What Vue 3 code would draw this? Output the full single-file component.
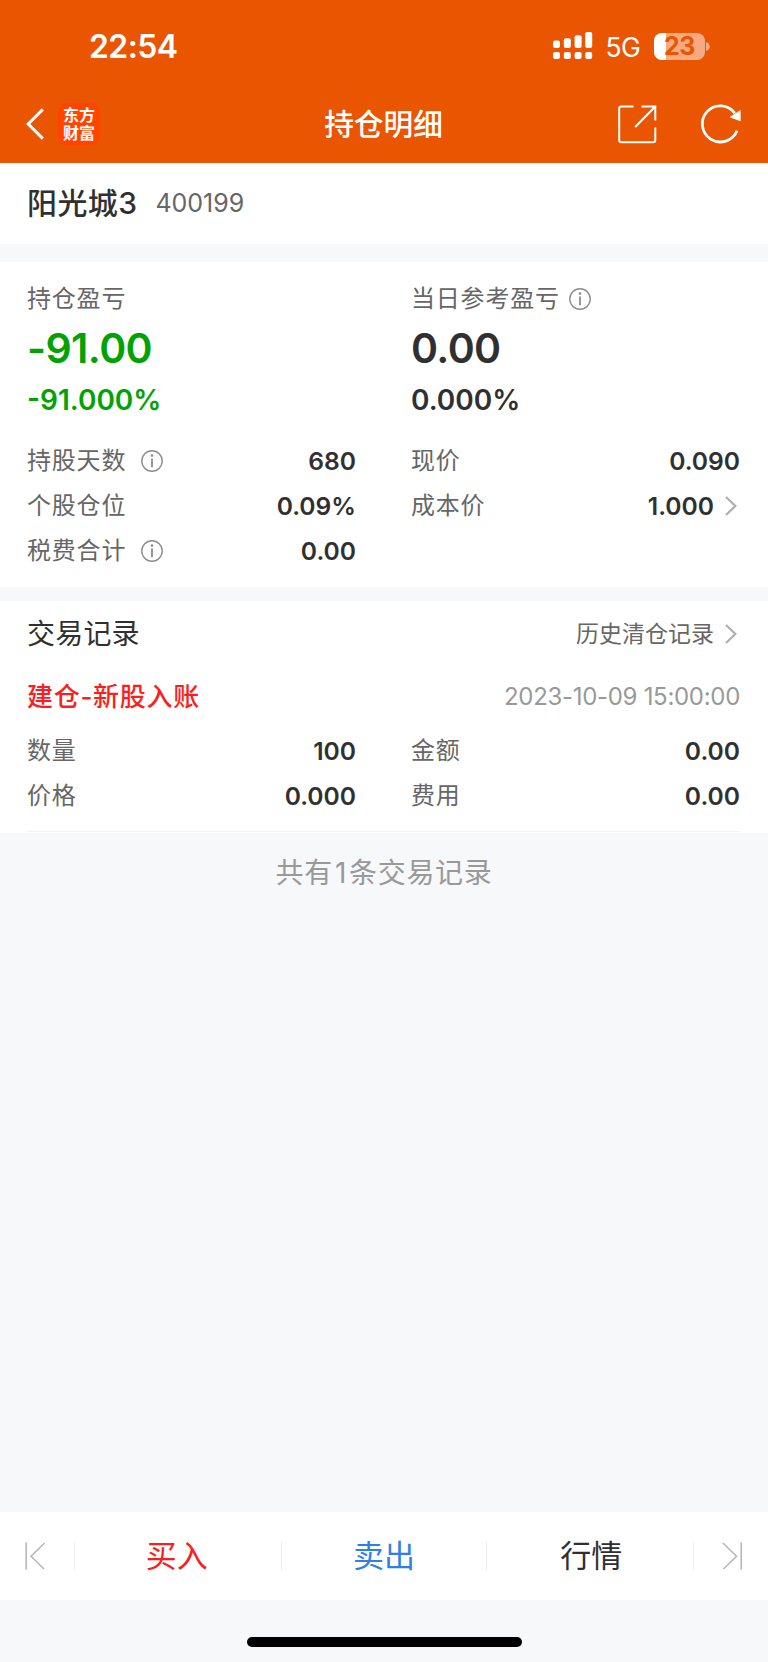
<template>
  <div class="page">
    <header class="header">
      <div class="status-bar">
        <span class="time">22:54</span>
        <div class="status-right">
          <svg class="signal" width="40" height="28" viewBox="0 0 40 28" fill="#fff">
            <rect x="0" y="8.5" width="7" height="7.5" rx="2" />
            <rect x="10.8" y="6.2" width="7" height="9.8" rx="2" />
            <rect x="21.6" y="3.2" width="7" height="12.8" rx="2" />
            <rect x="32.2" y="0" width="7" height="16" rx="2" />
            <rect x="0" y="20" width="7" height="7" rx="2" />
            <rect x="10.8" y="20" width="7" height="7" rx="2" />
            <rect x="21.6" y="20" width="7" height="7" rx="2" />
            <rect x="32.2" y="20" width="7" height="7" rx="2" />
          </svg>
          <span class="network">5G</span>
          <div class="battery">
            <div class="battery-level" :style="{ width: battery + '%' }"></div>
            <span class="battery-text">{{ battery }}</span>
          </div>
          <svg class="battery-cap" width="4" height="9" viewBox="0 0 4 9">
            <path d="M0 0C5 1.6 5 7.4 0 9Z" fill="#fff" fill-opacity="0.5" />
          </svg>
        </div>
      </div>
      <div class="nav-bar">
        <div class="nav-left">
          <svg width="18" height="32" viewBox="0 0 18 32" fill="none" stroke="#fff" stroke-width="3">
            <path d="M16.8 1.4L2.2 16L16.8 30.6" />
          </svg>
          <div class="logo">
            <span>东方</span>
            <span>财富</span>
          </div>
        </div>
        <h1 class="nav-title">持仓明细</h1>
        <div class="nav-right">
          <svg width="39" height="39" viewBox="0 0 39 39" fill="none" stroke="#fff" stroke-width="2">
            <path d="M15.5 1.5H3.5Q1.2 1.5 1.2 3.8V35Q1.2 37.3 3.5 37.3H35Q37.3 37.3 37.3 35V22.5" />
            <path d="M23.5 1.5H37.3V15.5M37 1.8L17.2 22" />
          </svg>
          <svg width="40" height="40" viewBox="0 0 40 40" fill="none">
            <path
              d="M33.8 9.2A18 18 0 1 0 36 26.8"
              stroke="#fff"
              stroke-width="2.8"
            />
            <path d="M39.6 6V17.2L28.4 13.2Z" fill="#fff" />
          </svg>
        </div>
      </div>
    </header>

    <section class="stock">
      <span class="stock-name">阳光城3</span>
      <span class="stock-code">400199</span>
    </section>

    <section class="position">
      <div class="columns">
        <div class="summary green">
          <div class="label">持仓盈亏</div>
          <div class="amount">-91.00</div>
          <div class="percent">-91.000%</div>
        </div>
        <div class="summary">
          <div class="label">
            当日参考盈亏
            <svg class="info near" viewBox="0 0 22 22"><use href="#info-icon" /></svg>
          </div>
          <div class="amount">0.00</div>
          <div class="percent">0.000%</div>
        </div>
      </div>
      <div class="columns details">
        <div v-for="(column, i) in details" :key="i" class="column">
          <div v-for="row in column" :key="row.label" class="row">
            <span class="label">
              {{ row.label }}
              <svg v-if="row.info" class="info" viewBox="0 0 22 22"><use href="#info-icon" /></svg>
            </span>
            <span class="value">
              {{ row.value }}
              <svg v-if="row.link" class="arrow" viewBox="0 0 12 20"><use href="#arrow-icon" /></svg>
            </span>
          </div>
        </div>
      </div>
    </section>

    <section class="records">
      <div class="records-head">
        <h2>交易记录</h2>
        <div class="history">
          历史清仓记录
          <svg class="arrow" viewBox="0 0 12 20"><use href="#arrow-icon" /></svg>
        </div>
      </div>
      <div class="record-title">
        <span class="record-type">建仓-新股入账</span>
        <span class="record-time">2023-10-09 15:00:00</span>
      </div>
      <div class="columns record">
        <div v-for="(column, i) in record" :key="i" class="column">
          <div v-for="row in column" :key="row.label" class="row">
            <span class="label">{{ row.label }}</span>
            <span class="value">{{ row.value }}</span>
          </div>
        </div>
      </div>
    </section>

    <main class="empty">共有<span class="count">1</span>条交易记录</main>

    <nav class="tab-bar">
      <button class="tab-edge first">
        <svg width="21" height="28" viewBox="0 0 21 28" fill="none" stroke="#b8b8b8" stroke-width="1.6">
          <path d="M1.2 0.5V27.5M19.6 1L6 14.2L19 27" />
        </svg>
      </button>
      <button class="tab buy">买入</button>
      <button class="tab sell">卖出</button>
      <button class="tab quote">行情</button>
      <button class="tab-edge last">
        <svg width="21" height="28" viewBox="0 0 21 28" fill="none" stroke="#b8b8b8" stroke-width="1.6">
          <path d="M19.2 0.5V27.5M0.9 1L14.5 14.2L1.5 27" />
        </svg>
      </button>
    </nav>
    <footer class="home">
      <div class="home-indicator"></div>
    </footer>

    <svg class="symbols" width="0" height="0">
      <symbol id="info-icon" viewBox="0 0 22 22">
        <circle cx="11" cy="11" r="10.2" fill="none" stroke="#8c8c8c" stroke-width="1.4" />
        <circle cx="11" cy="5.6" r="1.3" fill="#8c8c8c" />
        <path d="M11 8.6V17.2" stroke="#8c8c8c" stroke-width="1.8" />
      </symbol>
      <symbol id="arrow-icon" viewBox="0 0 12 20">
        <path d="M1 1L10.4 10L1 19" fill="none" stroke="#b0b0b0" stroke-width="2.3" />
      </symbol>
    </svg>
  </div>
</template>

<script setup>
import { ref } from "vue";

const battery = ref(23);

const details = [
  [
    { label: "持股天数", value: "680", info: true },
    { label: "个股仓位", value: "0.09%" },
    { label: "税费合计", value: "0.00", info: true },
  ],
  [
    { label: "现价", value: "0.090" },
    { label: "成本价", value: "1.000", link: true },
  ],
];

const record = [
  [
    { label: "数量", value: "100" },
    { label: "价格", value: "0.000" },
  ],
  [
    { label: "金额", value: "0.00" },
    { label: "费用", value: "0.00" },
  ],
];
</script>

<style>
body {
  margin: 0;
}
</style>

<style scoped>
.page {
  display: flex;
  flex-direction: column;
  width: 768px;
  height: 1662px;
  overflow: hidden;
  background: #f6f8fa;
  color: #303030;
  font-family: Inter, "Noto Sans CJK SC", sans-serif;
}

svg {
  display: block;
  flex: none;
}

h1,
h2 {
  margin: 0;
  font-weight: 500;
}

button {
  padding: 0;
  border: none;
  background: none;
  font-family: inherit;
}

.header {
  height: 163px;
  flex: none;
  background: #ea5502;
  color: #fff;
}

.status-bar {
  display: flex;
  justify-content: space-between;
  height: 86px;
  padding: 0 58px 0 89px;
  box-sizing: border-box;
}

.time {
  padding-top: 27px;
  font-size: 32px;
  font-weight: 600;
  line-height: 40px;
  letter-spacing: -0.6px;
}

.status-right {
  display: flex;
  align-items: center;
  height: 28px;
  padding-top: 32px;
}

.network {
  margin-left: 13px;
  font-size: 26.5px;
  line-height: 28px;
  padding-top: 2px;
  letter-spacing: -0.7px;
}

.battery {
  position: relative;
  width: 51px;
  height: 27px;
  margin-left: 14px;
  border-radius: 8px;
  background: rgba(255, 255, 255, 0.5);
}

.battery-level {
  height: 100%;
  border-radius: 8px 0 0 8px;
  background: #fff;
}

.battery-text {
  position: absolute;
  inset: -2px 0 auto;
  color: #ea5502;
  font-size: 25px;
  font-weight: 700;
  line-height: 30px;
  text-align: center;
  letter-spacing: -0.5px;
}

.battery-cap {
  margin-left: 1px;
}

.nav-bar {
  display: grid;
  grid-template-columns: 1fr auto 1fr;
  align-items: center;
  height: 76px;
  padding: 0 27px 0 26px;
}

.nav-left {
  display: flex;
  align-items: center;
  gap: 14px;
}

.logo {
  display: flex;
  flex-direction: column;
  justify-content: center;
  width: 42px;
  height: 42px;
  border-radius: 9px;
  background: #ff4400;
  font-size: 16px;
  font-weight: 700;
  line-height: 18px;
  text-align: center;
}

.nav-title {
  font-size: 29.7px;
  line-height: 40px;
}

.nav-right {
  display: flex;
  justify-content: flex-end;
  align-items: center;
  gap: 44px;
}

.stock {
  display: flex;
  align-items: center;
  flex: none;
  height: 81px;
  padding: 0 27px 2px 27px;
  box-sizing: border-box;
  background: #fff;
}

.stock-name {
  font-size: 30px;
  font-weight: 500;
  line-height: 40px;
  letter-spacing: 0.4px;
}

.stock-code {
  margin-left: 18px;
  color: #666;
  font-size: 25px;
  line-height: 40px;
}

.position {
  flex: none;
  height: 325px;
  margin-top: 18px;
  padding: 19px 28px 0 27px;
  box-sizing: border-box;
  background: #fff;
}

.columns {
  display: grid;
  grid-template-columns: 329px 329px;
  column-gap: 55px;
}

.label {
  display: flex;
  align-items: center;
  color: #666;
  font-size: 24px;
  line-height: 36px;
  letter-spacing: 0.8px;
}

.info {
  width: 22px;
  height: 22px;
  margin-left: 15px;
}

.info.near {
  margin-left: 9px;
}

.amount {
  margin-top: 7px;
  font-size: 41px;
  font-weight: 600;
  line-height: 48px;
  letter-spacing: -0.6px;
}

.percent {
  margin-top: 10px;
  font-size: 28px;
  font-weight: 600;
  line-height: 36px;
}

.green .amount,
.green .percent {
  color: #03a203;
}

.details {
  margin-top: 21px;
}

.row {
  display: flex;
  align-items: center;
  justify-content: space-between;
  height: 44.8px;
}

.value {
  display: flex;
  align-items: center;
  font-size: 24.6px;
  font-weight: 600;
  line-height: 36px;
}

.arrow {
  width: 12px;
  height: 20px;
  margin: 0 3px 0 11px;
}

.records {
  flex: none;
  height: 232px;
  margin-top: 14px;
  padding: 13px 28px 0 27px;
  box-sizing: border-box;
  background: #fff;
}

.records-head,
.record-title {
  display: flex;
  align-items: center;
  justify-content: space-between;
}

.records-head h2 {
  font-size: 28px;
  font-weight: 400;
  line-height: 40px;
  letter-spacing: 0.2px;
}

.history {
  display: flex;
  align-items: center;
  color: #666;
  font-size: 23px;
  line-height: 40px;
}

.record-title {
  margin-top: 23px;
  line-height: 40px;
}

.record-type {
  color: #fa1e1e;
  font-size: 26px;
  font-weight: 500;
  letter-spacing: 0.7px;
}

.record-time {
  color: #999;
  font-size: 24px;
  letter-spacing: -0.3px;
}

.record {
  height: 102px;
  margin-top: 12px;
  border-bottom: 1px solid #f0f2f5;
}

.empty {
  flex: 1;
  padding-top: 20px;
  color: #999;
  font-size: 28px;
  line-height: 40px;
  letter-spacing: 0.7px;
  text-align: center;
}

.count {
  margin: 0 2px;
}

.tab-bar {
  display: flex;
  align-items: center;
  flex: none;
  height: 88px;
  background: #fff;
}

.tab-edge {
  display: flex;
  align-items: center;
  width: 74px;
  height: 30px;
}

.tab-edge.first {
  padding-left: 25px;
}

.tab-edge.last {
  padding-left: 28px;
}

.tab {
  flex: 1;
  height: 30px;
  box-sizing: border-box;
  border-right: 1px solid #eeeff1;
  color: #303030;
  font-size: 31px;
  line-height: 30px;
}

.tab.buy {
  padding-right: 3px;
  border-left: 1px solid #eeeff1;
  color: #fa1e1e;
}

.tab.sell {
  color: #2f7fe8;
}

.tab.quote {
  padding-left: 3px;
}

.home {
  display: flex;
  justify-content: center;
  flex: none;
  height: 62px;
}

.home-indicator {
  width: 275px;
  height: 10px;
  margin-top: 37px;
  border-radius: 5px;
  background: #000;
}
</style>
